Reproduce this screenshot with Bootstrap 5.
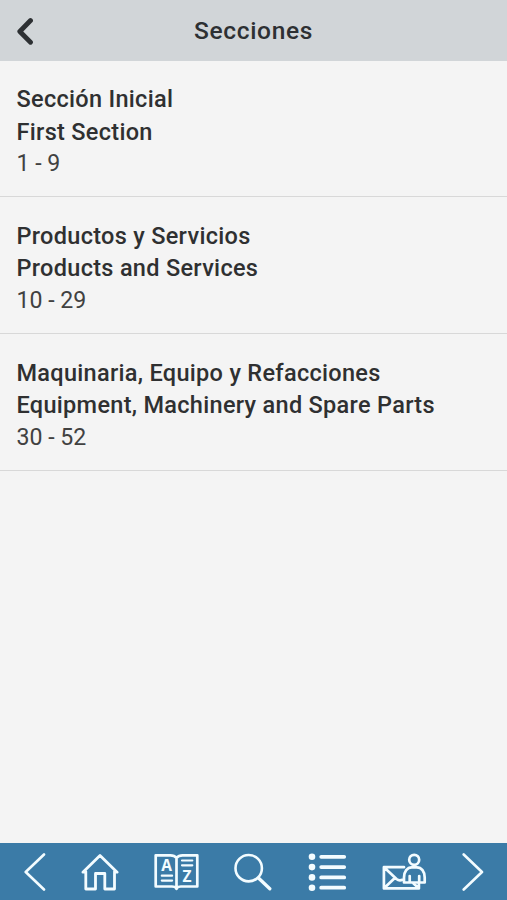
<!DOCTYPE html>
<html lang="es">
<head>
<meta charset="utf-8">
<meta name="viewport" content="width=device-width, initial-scale=1">
<title>Secciones</title>
<link rel="stylesheet" href="https://cdn.jsdelivr.net/npm/bootstrap@5.3.0/dist/css/bootstrap.min.css">
<style>
body{font-family:Roboto,sans-serif;background:#f4f4f4;color:#2f3031;font-size:23.5px;line-height:32.5px;letter-spacing:.3px}
.topbar{height:61px;background:#d1d5d8;display:grid;grid-template-columns:60px 1fr 60px}
.topbar h1{font-size:24.5px;font-weight:500;letter-spacing:.65px;color:#2d3033}
.topbar a{padding-left:15px;color:#2d3033}
.sections .list-group-item{height:137px;padding:22.500px 16.500px 0;background:transparent;color:inherit;border-color:#d8d8d8}
.sections .list-group-item:first-child{height:136px;padding-top:22px}
.sections .list-group-item:last-child{border-bottom-width:1px}
.sections .title-line{font-weight:500}
.sections .pages{font-weight:400;font-size:23.100px;letter-spacing:0;color:#414141}
.toolbar{height:57px;background:#3b7ba7;padding:0 22.500px 0 23.500px}
.toolbar a{color:#f3fcff;line-height:0}
.toolbar svg{fill:none;stroke:currentColor;stroke-width:2.6;stroke-linecap:round;stroke-linejoin:round}
.toolbar text{fill:currentColor;stroke:none;font-family:"Open Sans",sans-serif;font-size:15.500px;font-weight:700;letter-spacing:0}
</style>
<script src="https://cdn.jsdelivr.net/npm/bootstrap@5.3.0/dist/js/bootstrap.bundle.min.js"></script>
</head>
<body class="d-flex flex-column vh-100 overflow-hidden">
<header class="topbar align-items-center">
  <a href="#" aria-label="Volver" class="d-flex"><svg width="18" height="28" viewBox="0 0 18 28" fill="none" stroke="currentColor" stroke-width="4.8" stroke-linecap="round" stroke-linejoin="round"><path d="M15.500 3.500 4.800 14.500l10.700 10.700"/></svg></a>
  <h1 class="m-0 text-center">Secciones</h1>
</header>
<main class="flex-grow-1">
  <div class="list-group list-group-flush sections">
    <a href="#" class="list-group-item">
      <div class="title-line">Sección Inicial</div>
      <div class="title-line">First Section</div>
      <div class="pages">1 - 9</div>
    </a>
    <a href="#" class="list-group-item">
      <div class="title-line">Productos y Servicios</div>
      <div class="title-line">Products and Services</div>
      <div class="pages">10 - 29</div>
    </a>
    <a href="#" class="list-group-item">
      <div class="title-line">Maquinaria, Equipo y Refacciones</div>
      <div class="title-line">Equipment, Machinery and Spare Parts</div>
      <div class="pages">30 - 52</div>
    </a>
  </div>
</main>
<nav class="toolbar d-flex justify-content-between align-items-center">
  <a href="#" aria-label="Anterior"><svg width="22" height="57" viewBox="0 0 22 57"><path d="M20 11.500 1.700 29 20 46.500"/></svg></a>
  <a href="#" aria-label="Inicio"><svg width="38" height="57" viewBox="0 0 38 57"><path stroke-width="2.800" d="M4.800 28.500V46h9.700V30.500h9.300V46h9.700V28.500M4.800 29.200H1.900L19 12.500l17.100 16.700h-2.600"/></svg></a>
  <a href="#" aria-label="Índice"><svg width="45" height="57" viewBox="0 0 45 57"><path stroke-width="2.700" d="M22.500 14.800c-1.700-2-3.800-2.500-6-2.500H1.700v31.200H18c2 0 3.200.4 4.500 1.700 1.300-1.300 2.500-1.700 4.500-1.700h16.300V12.300H28.500c-2.200 0-4.300.5-6 2.500ZM22.500 15v31"/><path stroke-width="2.200" d="M7.800 32.700h10.300M7.800 37.600h10.300M28 17.500h10.300M28 22.300h10.300"/><text x="12.700" y="28.300" text-anchor="middle">A</text><text x="33" y="38.600" text-anchor="middle">Z</text></svg></a>
  <a href="#" aria-label="Buscar"><svg width="38" height="57" viewBox="0 0 38 57"><circle cx="14.700" cy="25.200" r="13.200"/><path stroke-width="3.300" d="m25 35.500 10.800 10.300"/></svg></a>
  <a href="#" aria-label="Secciones"><svg width="39" height="57" viewBox="0 0 39 57"><g fill="currentColor" stroke="none"><circle cx="4" cy="13.800" r="3.300"/><circle cx="4" cy="24.100" r="3.300"/><circle cx="4" cy="34.400" r="3.300"/><circle cx="4" cy="44.700" r="3.300"/></g><path stroke-width="3.800" d="M13.200 13.800h23M13.200 24.100h23M13.200 34.400h23M13.200 44.700h23"/></svg></a>
  <a href="#" aria-label="Contacto"><svg width="45" height="57" viewBox="0 0 45 57"><g stroke-width="2.700"><path d="M22 24.200H1.900v21.200h35v-5M2.300 24.500 14.500 36c1.800 1.600 3.800 1.800 6 .8M2.300 45l10.500-10M36.500 45l-5-4.500"/><circle cx="32.200" cy="16.800" r="5"/><path d="M22 39.500V34.500c0-6 3.300-10.200 7.800-10.200h5c4.700 0 7.900 4.200 7.900 10.200v5ZM27.700 33v6M37.200 33v6"/></g></svg></a>
  <a href="#" aria-label="Siguiente"><svg width="22" height="57" viewBox="0 0 22 57"><path d="M1.700 11.500 20 29 1.700 46.500"/></svg></a>
</nav>
</body>
</html>
